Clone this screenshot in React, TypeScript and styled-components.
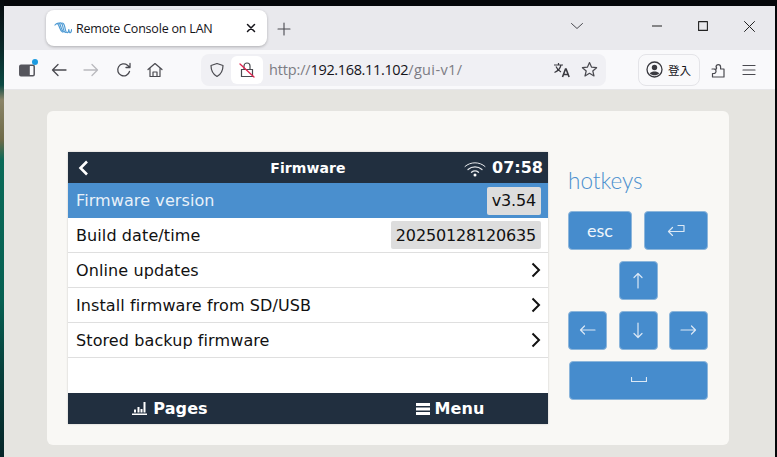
import React from 'react';
import styled, { createGlobalStyle } from 'styled-components';

const GlobalStyle = createGlobalStyle`
  html, body { margin: 0; padding: 0; background: #06090c; overflow: hidden; }
`;

const Desktop = styled.div`
  width: 777px;
  height: 457px;
  display: flex;
  background: #05070a;
`;

const Wallpaper = styled.div`
  width: 4px;
  flex: none;
  background: linear-gradient(180deg, #06090c 0, #0a2a2a 50px, #0c4a44 85px, #8a8468 100px, #6e6a48 140px, #0a6a58 160px, #066052 300px, #07403c 370px, #062528 457px);
`;

const Browser = styled.div`
  width: 771px;
  margin-top: 6px;
  display: flex;
  flex-direction: column;
`;

const TabStrip = styled.div`
  height: 44px;
  flex: none;
  background: #e9e9ed;
  display: flex;
  align-items: flex-start;
  padding: 4px 0 0 42px;
  box-sizing: border-box;
`;

const Tab = styled.div`
  width: 221px;
  height: 36px;
  background: #fff;
  border-radius: 8px;
  box-shadow: 0 1px 3px rgba(0, 0, 0, 0.25);
  display: flex;
  align-items: center;
  padding: 0 11px 0 8px;
  box-sizing: border-box;
  color: #15141a;
  font: 12.5px "Open Sans", sans-serif;
`;

const TabTitle = styled.span`
  flex: 1;
  margin-left: 4px;
  letter-spacing: -0.2px;
  white-space: nowrap;
`;

const NewTab = styled.div`
  margin: 9px 0 0 10px;
  height: 20px;
  display: flex;
  align-items: center;
`;

const StripEnd = styled.div`
  margin-left: auto;
  display: flex;
  align-items: center;
  height: 32px;
  padding-right: 20px;
  gap: 36px;
`;

const TabList = styled.div`
  display: flex;
  margin-right: 32px;
`;

const Toolbar = styled.div`
  height: 40px;
  flex: none;
  background: #f9f9fb;
  border-bottom: 1px solid #e6e6e8;
  box-sizing: border-box;
  display: flex;
  align-items: center;
  padding: 0 0 0 15px;
`;

const ToolIcon = styled.div<{ $gap?: number }>`
  width: 16px;
  height: 16px;
  flex: none;
  margin-left: ${p => p.$gap ?? 0}px;
  position: relative;
  display: flex;
`;

const Dot = styled.span`
  position: absolute;
  top: -3px;
  right: -3px;
  width: 6px;
  height: 6px;
  border-radius: 50%;
  background: #1b9ae0;
`;

const UrlBar = styled.div`
  margin-left: 38px;
  width: 405px;
  height: 32px;
  flex: none;
  background: #f0f0f4;
  border-radius: 8px;
  display: flex;
  align-items: center;
  padding-left: 8px;
  box-sizing: border-box;
`;

const LockBox = styled.div`
  margin-left: 6px;
  width: 32px;
  height: 28px;
  background: #fff;
  border-radius: 6px;
  display: flex;
  align-items: center;
  justify-content: center;
`;

const Url = styled.div`
  margin-left: 6px;
  flex: 1;
  font: 14.5px "Open Sans", sans-serif;
  letter-spacing: -0.15px;
  color: #7c7c83;
  white-space: nowrap;
`;

const Host = styled.span`
  color: #15141a;
  letter-spacing: -0.35px;
`;

const UrlPath = styled.span`
  letter-spacing: 0.35px;
`;

const UrlIcons = styled.div`
  display: flex;
  align-items: center;
  gap: 10px;
  padding-right: 8px;
`;

const SignIn = styled.div`
  margin-left: 32px;
  width: 62px;
  height: 32px;
  border: 1px solid #e4e4e8;
  border-radius: 8px;
  box-sizing: border-box;
  display: flex;
  align-items: center;
  padding-left: 7px;
  gap: 5px;
  font: 11.5px "Noto Sans CJK TC", sans-serif;
  color: #15141a;
`;

const Page = styled.div`
  flex: 1;
  background: #e5e4e0;
  padding: 21px 46px 12px 43px;
  display: flex;
`;

const Card = styled.div`
  flex: 1;
  background: #f9f8f5;
  border-radius: 6px;
  padding: 41px 21px 21px 21px;
  display: flex;
  gap: 20px;
`;

const Screen = styled.div`
  width: 480px;
  height: 272px;
  flex: none;
  background: #fff;
  display: flex;
  flex-direction: column;
  font-family: "DejaVu Sans", sans-serif;
  box-shadow: 0 0 2px rgba(0, 0, 0, 0.2);
`;

const ScreenBar = styled.div`
  height: 31px;
  flex: none;
  background: #212f3f;
  color: #fff;
  display: flex;
  align-items: center;
  justify-content: space-between;
  font-weight: 700;
`;

const Back = styled.div`
  width: 37px;
  padding-left: 10px;
  box-sizing: border-box;
  display: flex;
`;

const ScreenTitle = styled.div`
  flex: 1;
  text-align: center;
  font-size: 14px;
  letter-spacing: 0.1px;
  padding-left: 48px;
`;

const Status = styled.div`
  width: 85px;
  display: flex;
  align-items: center;
  justify-content: flex-end;
  padding-right: 5px;
  box-sizing: border-box;
  font-size: 16px;
  gap: 6px;
  white-space: nowrap;
`;

const Row = styled.div<{ $active?: boolean }>`
  height: 35px;
  flex: none;
  box-sizing: border-box;
  display: flex;
  align-items: center;
  justify-content: space-between;
  padding: 0 7px 0 8px;
  font-size: 16px;
  letter-spacing: 0.1px;
  color: ${p => (p.$active ? '#e8f1f9' : '#111')};
  background: ${p => (p.$active ? '#4a8fce' : '#fff')};
  border-bottom: ${p => (p.$active ? 'none' : '1px solid #dfdfdf')};
`;

const Value = styled.div`
  height: 28px;
  padding: 0 5px;
  display: flex;
  align-items: center;
  border-radius: 2px;
  background: #dddddd;
  color: #111;
  letter-spacing: -0.17px;
`;

const Filler = styled.div`
  flex: 1;
`;

const BottomCell = styled.div<{ $width: number; $gap: number }>`
  width: ${p => p.$width}px;
  display: flex;
  align-items: center;
  justify-content: center;
  gap: ${p => p.$gap}px;
  font-size: 16px;
  letter-spacing: 0.1px;
`;

const Hotkeys = styled.div`
  width: 140px;
  flex: none;
  display: flex;
  flex-direction: column;
  gap: 11.5px;
`;

const HotkeysTitle = styled.div`
  height: 48px;
  margin-bottom: -0.5px;
  padding-top: 16px;
  box-sizing: border-box;
  font: 300 22.5px/26px Lato, sans-serif;
  color: #4a8fce;
`;

const KeyRow = styled.div<{ $justify?: string }>`
  display: flex;
  justify-content: ${p => p.$justify ?? 'space-between'};
`;

const Key = styled.div<{ $width: number }>`
  width: ${p => p.$width}px;
  height: 38.5px;
  box-sizing: border-box;
  background: #468ccd;
  border: 1px solid #8db6db;
  border-radius: 4px;
  color: #eef5fb;
  display: flex;
  align-items: center;
  justify-content: center;
  font: 400 18px Lato, sans-serif;
`;

const Line = ({ d, w = 16, h = 16, color = '#4a4a50', sw = 1.4 }: { d: string; w?: number; h?: number; color?: string; sw?: number }) => (
  <svg width={w} height={h} viewBox={`0 0 ${w} ${h}`} fill="none" stroke={color} strokeWidth={sw} strokeLinecap="round" strokeLinejoin="round">
    <path d={d} />
  </svg>
);

const VictronMark = () => (
  <svg width="18" height="12" viewBox="0 0 18 12" fill="none" stroke="#4f9bd4" strokeWidth="1.200" strokeLinecap="round">
    <path d="M1 3c2-2.500 3-1.500 4 1s1.500 5 3.500 6" />
    <path d="M3 1.500c2.500-1 3 .5 3.800 3s1.500 5 3.200 5.500" />
    <path d="M5.500 1c2-.5 2.800 1 3.300 3.500s1.200 5.500 2.700 6" />
    <path d="M8 1c1.800 0 2.300 1.500 2.800 4s1 5.500 2.200 5.500" />
    <path d="M13 10.500c1 .5 1.500-.5 1.800-3M14.800 7.500c.3 3 1 3.500 1.800 3s.8-1.500 1-3" />
  </svg>
);

const Wifi = () => (
  <svg width="22" height="18" viewBox="0 0 22 18" fill="none" stroke="#e6e9ec" strokeLinecap="round">
    <path d="M1 7.500c5.500-5 14.500-5 20 0" strokeWidth="1" />
    <path d="M4 10.500c4-3.500 10-3.500 14 0" strokeWidth="1.200" />
    <path d="M7.500 13.200c2-1.500 5-1.500 7 0" strokeWidth="1.400" />
    <circle cx="11" cy="16" r="1.500" fill="#fff" stroke="none" />
  </svg>
);

const PagesIcon = () => (
  <svg width="15" height="13" viewBox="0 0 15 13" fill="#fff">
    <rect x="0" y="11.500" width="15" height="1.500" />
    <rect x="2" y="7.500" width="2" height="3" />
    <rect x="5.500" y="5" width="2" height="5.500" />
    <rect x="8.500" y="7" width="2" height="3.500" />
    <rect x="11.500" y="0" width="2" height="10.500" />
  </svg>
);

const MenuIcon = () => (
  <svg width="14" height="12" viewBox="0 0 14 12" fill="#fff">
    <rect width="14" height="3" />
    <rect y="4.500" width="14" height="3" />
    <rect y="9" width="14" height="3" />
  </svg>
);

const Chevron = () => (
  <svg width="10" height="16" viewBox="0 0 10 16" fill="none" stroke="#111" strokeWidth="2">
    <path d="M1.500 1.500 8 8l-6.500 6.500" />
  </svg>
);

const SidebarIcon = () => (
  <svg width="16" height="16" viewBox="0 0 16 16">
    <rect x="0.800" y="3.300" width="14.400" height="10.400" rx="1.200" fill="none" stroke="#55555c" strokeWidth="1.500" />
    <rect x="0.800" y="3.300" width="10" height="10.400" rx="1" fill="#55555c" />
  </svg>
);

const rows = [
  { label: 'Online updates' },
  { label: 'Install firmware from SD/USB' },
  { label: 'Stored backup firmware' },
];

export default function App() {
  return (
    <Desktop>
      <GlobalStyle />
      <Wallpaper />
      <Browser>
        <TabStrip>
          <Tab>
            <VictronMark />
            <TabTitle>Remote Console on LAN</TabTitle>
            <Line w={10} h={10} color="#15141a" sw={1.5} d="M1.500 1.500l7 7M8.500 1.500l-7 7" />
          </Tab>
          <NewTab>
            <Line w={14} h={14} sw={1.1} d="M7 1v12M1 7h12" />
          </NewTab>
          <StripEnd>
            <TabList>
              <Line w={14} h={8} sw={1} d="M1.500 1.500 7 6.500l5.500-5" />
            </TabList>
            <Line w={10} h={2} sw={1.2} color="#222" d="M0 1h10" />
            <Line w={10} h={10} sw={1.1} color="#222" d="M.6.6h8.800v8.800H.6z" />
            <Line w={11} h={11} sw={1} color="#222" d="M.5.5l10 10M10.500.5l-10 10" />
          </StripEnd>
        </TabStrip>
        <Toolbar>
          <ToolIcon>
            <SidebarIcon />
            <Dot />
          </ToolIcon>
          <ToolIcon $gap={16}>
            <Line sw={1.3} d="M15 8H1.500M7 2.500 1.500 8 7 13.500" />
          </ToolIcon>
          <ToolIcon $gap={16}>
            <Line sw={1.3} color="#b9b9be" d="M1 8h13.500M9 2.500 14.500 8 9 13.500" />
          </ToolIcon>
          <ToolIcon $gap={17}>
            <Line sw={1.3} d="M13.500 9.500A6 6 0 1 1 11.500 3.200L14 5.500M14 1.500v4h-4" />
          </ToolIcon>
          <ToolIcon $gap={15}>
            <Line sw={1.2} d="M1 7.500 8 1.500l7 6M3 6v8.500h10V6M6 14.500V10h4v4.500" />
          </ToolIcon>
          <UrlBar>
            <Line sw={1.2} d="M8 1.500 14 3.500c0 5-1.500 8.500-6 11-4.500-2.500-6-6-6-11z" />
            <LockBox>
              <svg width="16" height="18" viewBox="0 0 16 18" fill="none" strokeLinecap="round">
                <path d="M5 8V5a3 3 0 0 1 6 0v3M2.500 8.500h11v7h-11z" stroke="#4a4a50" strokeWidth="1.200" />
                <path d="M1 3l14 13" stroke="#e0234e" strokeWidth="1.300" />
              </svg>
            </LockBox>
            <Url>
              http://<Host>192.168.11.102</Host><UrlPath>/gui-v1/</UrlPath>
            </Url>
            <UrlIcons>
              <svg width="18" height="16" viewBox="0 0 18 16" fill="none" stroke="#3a3a40" strokeWidth="1.200">
                <path d="M1 3h9M5.500 1v2M8 3c-.8 3.500-3 6-6.500 7.500M3 4.500c1 2.500 3 4.500 5 5.500" />
                <path d="M9.500 15l3-8h.6l3 8M10.500 12.500h5" strokeWidth="1.600" />
              </svg>
              <Line w={17} h={17} sw={1.2} d="M8.500 1.500l2.100 4.700 5 .5-3.800 3.300 1.200 5-4.500-2.700-4.500 2.700 1.200-5L1.400 6.700l5-.5z" />
            </UrlIcons>
          </UrlBar>
          <SignIn>
            <svg width="17" height="17" viewBox="0 0 17 17">
              <circle cx="8.500" cy="8.500" r="7.500" fill="none" stroke="#3a3a40" strokeWidth="1.300" />
              <circle cx="8.500" cy="6.500" r="2.700" fill="#3a3a40" />
              <path d="M3.800 12.500c2-2.600 7.400-2.600 9.400 0-2.500 2.400-6.900 2.400-9.400 0z" fill="#3a3a40" />
            </svg>
            <span>登入</span>
          </SignIn>
          <ToolIcon $gap={10}>
            <Line sw={1.2} d="M2 7h4.500V5H6a2 2 0 0 1 0-.1 2.300 2.300 0 0 1 4.600 0V7h3.400v8H2.500v-3.500h1.300a2 2 0 0 0 0-4.500H2z" />
          </ToolIcon>
          <ToolIcon $gap={15}>
            <Line sw={1.2} d="M2 3.500h12M2 8h12M2 12.500h12" />
          </ToolIcon>
        </Toolbar>
        <Page>
          <Card>
            <Screen>
              <ScreenBar>
                <Back>
                  <svg width="11" height="16" viewBox="0 0 11 16" fill="none" stroke="#fff" strokeWidth="2.600">
                    <path d="M9 1.500 2.500 8 9 14.500" />
                  </svg>
                </Back>
                <ScreenTitle>Firmware</ScreenTitle>
                <Status>
                  <Wifi />
                  07:58
                </Status>
              </ScreenBar>
              <Row $active>
                Firmware version
                <Value>v3.54</Value>
              </Row>
              <Row>
                Build date/time
                <Value>20250128120635</Value>
              </Row>
              {rows.map(r => (
                <Row key={r.label}>
                  {r.label}
                  <Chevron />
                </Row>
              ))}
              <Filler />
              <ScreenBar>
                <BottomCell $width={204} $gap={6}>
                  <PagesIcon />
                  Pages
                </BottomCell>
                <BottomCell $width={196} $gap={5}>
                  <MenuIcon />
                  Menu
                </BottomCell>
              </ScreenBar>
            </Screen>
            <Hotkeys>
              <HotkeysTitle>hotkeys</HotkeysTitle>
              <KeyRow>
                <Key $width={64}>esc</Key>
                <Key $width={64}>
                  <Line w={18} h={12} color="#dbe8f5" sw={1.2} d="M17 1.500v6H1.500M5.500 3.500l-4 4 4 4M11 1.500h6" />
                </Key>
              </KeyRow>
              <KeyRow $justify="center">
                <Key $width={39}>
                  <Line w={10} h={17} color="#dbe8f5" sw={1.2} d="M5 16V1.500M1 5.500l4-4 4 4" />
                </Key>
              </KeyRow>
              <KeyRow>
                <Key $width={39}>
                  <Line w={17} h={10} color="#dbe8f5" sw={1.2} d="M16 5H1.500M5.500 1l-4 4 4 4" />
                </Key>
                <Key $width={39}>
                  <Line w={10} h={17} color="#dbe8f5" sw={1.2} d="M5 1v14.500M1 11.500l4 4 4-4" />
                </Key>
                <Key $width={39}>
                  <Line w={17} h={10} color="#dbe8f5" sw={1.2} d="M1 5h14.500M11.500 1l4 4-4 4" />
                </Key>
              </KeyRow>
              <KeyRow $justify="flex-end">
                <Key $width={139}>
                  <Line w={16} h={6} color="#dbe8f5" sw={1.2} d="M.5.500v4h15v-4" />
                </Key>
              </KeyRow>
            </Hotkeys>
          </Card>
        </Page>
      </Browser>
    </Desktop>
  );
}
